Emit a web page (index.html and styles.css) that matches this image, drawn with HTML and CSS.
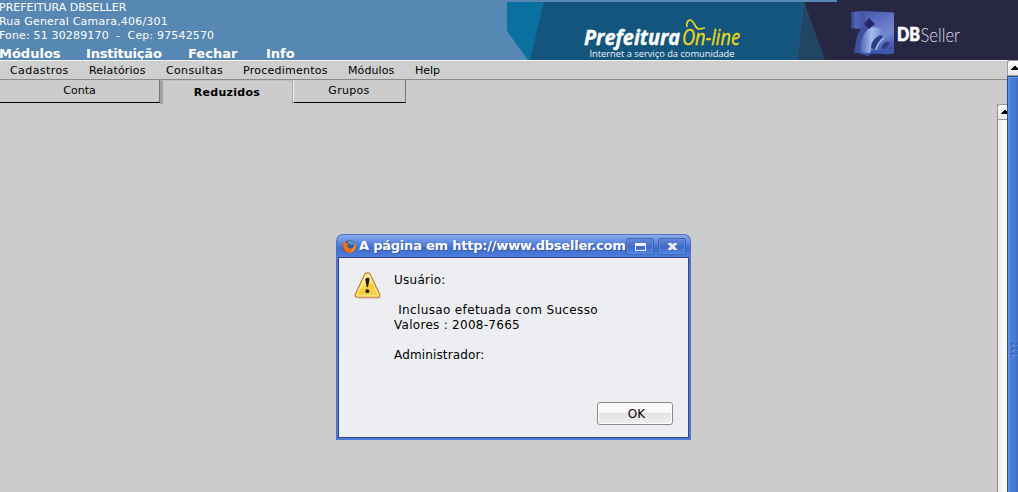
FILE: index.html
```html
<!DOCTYPE html>
<html lang="pt-BR">
<head>
<meta charset="utf-8">
<title>DBSeller</title>
<link rel="stylesheet" href="styles.css">
</head>
<body>
<div class="page">
  <header class="header">
    <div class="identity">
      <address class="address">
        <span class="a1">PREFEITURA DBSELLER</span>
        <span class="a2">Rua General Camara,406/301</span>
        <span class="a3">Fone: 51 30289170 &nbsp;- &nbsp;Cep: 97542570</span>
      </address>
      <nav class="main-nav"><span>Módulos</span><span class="tight">Instituição</span><span>Fechar</span><span>Info</span></nav>
    </div>
    <svg class="banner" width="511" height="60" viewBox="507 0 511 60">
      <defs>
        <linearGradient id="cube" x1="0" y1="0" x2=".3" y2="1"><stop offset="0" stop-color="#4656a8"/><stop offset=".35" stop-color="#5f72c4"/><stop offset=".7" stop-color="#7489cf"/><stop offset="1" stop-color="#4158ac"/></linearGradient>
        <linearGradient id="cubeSide" x1="0" y1="0" x2="1" y2="0"><stop offset="0" stop-color="#32408c"/><stop offset=".3" stop-color="#5264b4"/><stop offset="1" stop-color="#4252a2"/></linearGradient>
        <linearGradient id="cubeFront" x1="0" y1="0" x2="1" y2="0"><stop offset="0" stop-color="#4a5fb4"/><stop offset=".5" stop-color="#a4bdea"/><stop offset="1" stop-color="#6f88d0"/></linearGradient>
      </defs>
      <path fill="#5787b3" d="M507 0h330v2H507z"/>
      <path fill="#0a70a0" d="M507 2h37l-14 58h-2L507 31z"/>
      <path fill="#14557d" d="M543.500 2H804l-7 58H530z"/>
      <path fill="#214564" d="M804 2l-7 58h29z"/>
      <path fill="#272744" d="M804 2h33V0h181v60H825z"/>
      <text class="brand-bold" x="584" y="45" textLength="96" lengthAdjust="spacingAndGlyphs">Prefeitura</text>
      <text class="brand-light" x="682" y="45" textLength="58" lengthAdjust="spacingAndGlyphs">On-line</text>
      <path fill="none" stroke="#efd916" stroke-width="1.700" d="M687 27c-1-4 1-7 3-7 4 0 5 9 9 9 2 0 3-1 6-1"/>
      <text class="slogan" x="589.500" y="56.500" textLength="145" lengthAdjust="spacingAndGlyphs">Internet a serviço da comunidade</text>
      <path fill="url(#cube)" d="M864 11l30 1.500v41l-7 1-17-2-6-22z"/>
      <path fill="url(#cubeSide)" d="M851 12l13-1 2 15-7 3-8-1z"/>
      <path fill="#3f4fa2" d="M854 53l3-17 4-8 7-4 4 6-6 23z"/>
      <path fill="url(#cubeFront)" d="M860 52c0-12 4-21 11-25l8 1 4 4c-7 4-11 11-13 22l-10-1z"/>
      <path fill="#3d55ad" d="M854 52l15 1 5-3 10 3-13 1-3 2z"/>
      <path fill="#27266d" d="M869 18l6 6-6 5-5-5z"/>
      <path fill="#303b86" d="M871 48c0-6 4-11 10-13l2 2c-4 3-6 7-8 12zM882 48c0-4 3-7 7-6 2 2-2 5-5 7z"/>
      <path fill="none" stroke="#a9c1ec" stroke-width="1.500" d="M876 50c1-5 4-9 8-12"/>
      <text class="db-bold" x="897" y="41" textLength="23" lengthAdjust="spacingAndGlyphs">DB</text>
      <text class="db-light" x="920.500" y="41.500" textLength="39.500" lengthAdjust="spacingAndGlyphs">Seller</text>
    </svg>
  </header>
  <div class="work">
    <main class="content">
      <nav class="menubar"><span class="m1">Cadastros</span><span class="m2">Relatórios</span><span class="m3">Consultas</span><span class="m4">Procedimentos</span><span class="m5">Módulos</span><span class="m6">Help</span></nav>
      <div class="tabs">
        <div class="tab tab-conta">Conta</div>
        <div class="tab-active">Reduzidos</div>
        <div class="tab tab-grupos">Grupos</div>
      </div>
      <div class="frame">
        <div class="frame-body"></div>
        <div class="inner-scroll"><div class="arrow"><svg width="8" height="6" viewBox="0 0 8 6"><path d="M0 5h8v-1H7V3H6V2H5V1H3v1H2v1H1v1H0z"/></svg></div></div>
      </div>
    </main>
    <aside class="outer-scroll">
      <div class="arrow"><svg width="8" height="6" viewBox="0 0 8 6"><path d="M0 5h8v-1H7V3H6V2H5V1H3v1H2v1H1v1H0z"/></svg></div>
      <div class="thumb">
        <svg width="9" height="14" viewBox="0 0 9 14"><path fill="#3768ba" d="M1 0h3v3H1zM6 0h3v3H6zM1 5h3v3H1zM6 5h3v3H6zM1 10h3v3H1zM6 10h3v3H6z"/><path fill="#80aeee" d="M2.500 1.500H4V3H2.500zM7.500 1.500H9V3H7.500zM2.500 6.500H4V8H2.500zM7.500 6.500H9V8H7.500zM2.500 11.500H4V13H2.500zM7.500 11.500H9V13H7.500z"/></svg>
      </div>
    </aside>
  </div>
</div>

<section class="dialog">
  <div class="titlebar">
    <svg class="fox" width="15" height="15" viewBox="0 0 15 15">
      <circle cx="7.500" cy="7.500" r="6.500" fill="#d9581c"/>
      <circle cx="8" cy="6" r="4.800" fill="#2a5e9f"/>
      <path fill="#4d9bd5" d="M6 2c3-1 6 0 6.500 3L9 6 6 4z"/>
      <path fill="#e8731f" d="M1.500 2.500L4 4l3 .5-2 2 1 2c2 2 5 1 7-2l1-3c1 6-2 10.500-7 10.500C2 14 0 9 1.500 2.500z"/>
      <path fill="#f7bd3c" d="M12.500 4c1.500 4-.5 8-4 9 3-2 4-5 4-9z"/>
      <path fill="#8f2d1d" d="M1 6c0 4 2 7 6 8-4 0-7-3-6-8z"/>
    </svg>
    <h1>A página em http://www.dbseller.com</h1>
    <span class="winbtn"><svg width="11" height="8" viewBox="0 0 11 8"><path fill="#edf1fb" fill-rule="evenodd" d="M0 0h11v8H0zM1 3v4h9V3z"/></svg></span>
    <span class="winbtn close"><svg width="9" height="7" viewBox="0 0 9 7"><path fill="#edf1fb" d="M0 0h3l1.500 1.500L6 0h3v1L6.500 3.500 9 6v1H6L4.500 5.500 3 7H0V6l2.500-2.500L0 1z"/></svg></span>
  </div>
  <div class="dialog-body">
    <svg class="warning" width="27" height="28" viewBox="0 0 27 28">
      <defs><linearGradient id="warn" x1="0" y1="0" x2=".6" y2="1"><stop offset="0" stop-color="#fffbd0"/><stop offset=".5" stop-color="#fae66d"/><stop offset=".65" stop-color="#f4cf3c"/><stop offset="1" stop-color="#f5d34c"/></linearGradient></defs>
      <path fill="#d2d0cc" d="M4 26h20l3-2-1 3H4z"/>
      <path fill="url(#warn)" stroke="#cd7b37" stroke-width="1.300" stroke-linejoin="round" d="M11 2c1-1.500 4-1.500 5 0l9.500 20c.8 2 0 3.200-2 3.200H3.500c-2 0-2.800-1.200-2-3.200z"/>
      <path fill="none" stroke="#fff6b6" d="M12 3c.7-1 2.300-1 3 0l9 19c.5 1.500 0 2-1 2H4c-1 0-1.500-.5-1-2z"/>
      <path fill="#201a12" d="M11.300 7.500c.5-2.500 4.500-2.500 4.200 0L14 15h-1.300z"/><circle cx="13.400" cy="19.200" r="1.900" fill="#201a12"/>
    </svg>
    <div class="message">
      <p class="d1">Usuário:</p><p>&nbsp;</p>
      <p class="d2">&nbsp;Inclusao efetuada com Sucesso</p>
      <p class="d3">Valores : 2008-7665</p><p>&nbsp;</p>
      <p class="d4">Administrador:</p>
    </div>
    <button class="ok">OK</button>
  </div>
</section>
</body>
</html>
```
FILE: styles.css
```css
* { box-sizing: border-box; }
body { margin: 0; overflow: hidden; background: #ccc; font: 11px "DejaVu Sans", sans-serif; color: #000; }
svg { display: block; flex: none; }
span, .tab, .tab-active, p, h1 { white-space: pre; }
.page { display: flex; flex-direction: column; width: 1018px; height: 492px; }
.header { display: flex; height: 60px; background: #5787b3; color: #fff; }
.identity { width: 507px; }
.address { display: flex; flex-direction: column; height: 46px; padding-top: 1px; margin-left: -1px; font-style: normal; line-height: 14px; }
.a2 { letter-spacing: .21px; }
.a3 { letter-spacing: .16px; }
.main-nav { display: grid; grid-template-columns: 87px 102px 78px auto; margin-left: -1px; font-weight: bold; font-size: 13px; line-height: 15px; }
.tight { letter-spacing: -.2px; }
.brand-bold { font: italic bold 20.5px "Open Sans", sans-serif; fill: #fff; stroke: #fff; stroke-width: .4px; }
.brand-light { font: italic 21px "Open Sans", sans-serif; fill: #efd916; stroke: #efd916; stroke-width: .3px; }
.slogan { font: 9.5px "Open Sans", sans-serif; fill: #eef6fa; }
.db-bold { font: 900 18px Lato, sans-serif; fill: #fff; stroke: #fff; stroke-width: .6px; }
.db-light { font: 300 20px Lato, sans-serif; fill: #d9dbe8; }
.work { display: flex; flex: 1; }
.content { display: flex; flex-direction: column; width: 1007px; }
.menubar { display: grid; grid-template-columns: 79px 77px 77px 105px 67px auto; height: 20px; padding-left: 10px; border-top: 1px solid #f4f4f4; border-bottom: 1px solid #8b8b8b; background: #cfcfcf; line-height: 19px; }
.m1 { letter-spacing: .42px; }
.m2 { letter-spacing: .18px; }
.m3 { letter-spacing: .35px; }
.m4 { letter-spacing: .24px; }
.m5 { letter-spacing: .1px; }
.tabs { display: flex; height: 24px; }
.tab { height: 23px; border-right: 1px solid #777; border-bottom: 1px solid #000; text-align: center; line-height: 21px; }
.tab-conta { width: 160px; }
.tab-active { width: 133px; border-left: 3px solid #a1a1a1; border-top: 1px solid #bcbcbc; border-right: 1px solid #aaa; padding-right: 1px; text-align: center; line-height: 23px; font-weight: bold; letter-spacing: .28px; }
.tab-grupos { width: 113px; border-left: 1px solid #f2f2f2; padding-right: 1px; letter-spacing: .3px; }
.frame { display: flex; flex: 1; }
.frame-body { flex: 1; }
.inner-scroll { width: 10px; border-left: 1px solid #8b8b8b; background: linear-gradient(90deg, #eee, #fff); }
.arrow { display: flex; overflow: hidden; height: 16px; border: 1px solid #999; border-right: 0; border-radius: 3px 0 0 0; background: linear-gradient(#fff, #e9e9e9); padding: 4px 0 0 3px; }
.inner-scroll .arrow { margin-left: -1px; }
.outer-scroll { display: flex; flex-direction: column; width: 11px; }
.thumb { flex: 1; border: 1px solid #304f88; border-right: 0; border-bottom: 0; background: linear-gradient(90deg, #5b96ee 0 1px, #4e82d6 2px, #4878c8 8px, #416fbd); padding: 266px 0 0 2px; box-shadow: inset 0 1px #5b96ee; }
.dialog { position: absolute; left: 336px; top: 234px; width: 355px; height: 206px; padding: 0 2px 2px; border: 1px solid #5a6cc0; border-bottom-color: #4879d6; border-radius: 7px 7px 0 0; background: linear-gradient(#8aabec 0, #6690e3 6px, #426ccb 13px, #4c7ede 22px, #4b7fe4 100%); }
.titlebar { display: flex; height: 22px; padding-left: 3px; color: #fff; }
.fox { margin-top: 4px; }
h1 { width: 269px; flex: none; margin: 0; padding-left: 2px; font-size: 13px; line-height: 22px; letter-spacing: -.22px; text-shadow: 1px 1px #3658a5; }
.winbtn { display: flex; flex: none; align-items: center; justify-content: center; width: 28px; height: 17px; margin: 3px 4px 0 0; border: 1px solid #3c66b8; border-radius: 2px; background: linear-gradient(#6389d9, #416ac4 50%, #5286e4); box-shadow: inset 0 0 0 1px #6e98e366; }
.close { margin-right: 0; }
.dialog-body { display: grid; grid-template-columns: 55px 1fr; width: 351px; height: 181px; margin: 0 -1px; border: 1px solid #35427c; background: #edeef2; }
.warning { margin: 14px 0 0 15px; }
.message { padding-top: 15px; font-size: 12px; line-height: 15px; }
p { margin: 0; }
.d1 { letter-spacing: .25px; }
.d2 { letter-spacing: .36px; }
.d3 { letter-spacing: .28px; }
.d4 { letter-spacing: .14px; }
.ok { justify-self: end; grid-column: 1 / 3; align-self: end; width: 76px; height: 23px; margin: 0 15px 12px 0; padding: 0 0 0 3px; border: 1px solid #888; border-radius: 3px; background: linear-gradient(#fafafa 0 45%, #e2e2e2 50%, #f0f0f0); box-shadow: inset 0 0 0 1px #fff; font: 12px "DejaVu Sans", sans-serif; color: #000; }
```
